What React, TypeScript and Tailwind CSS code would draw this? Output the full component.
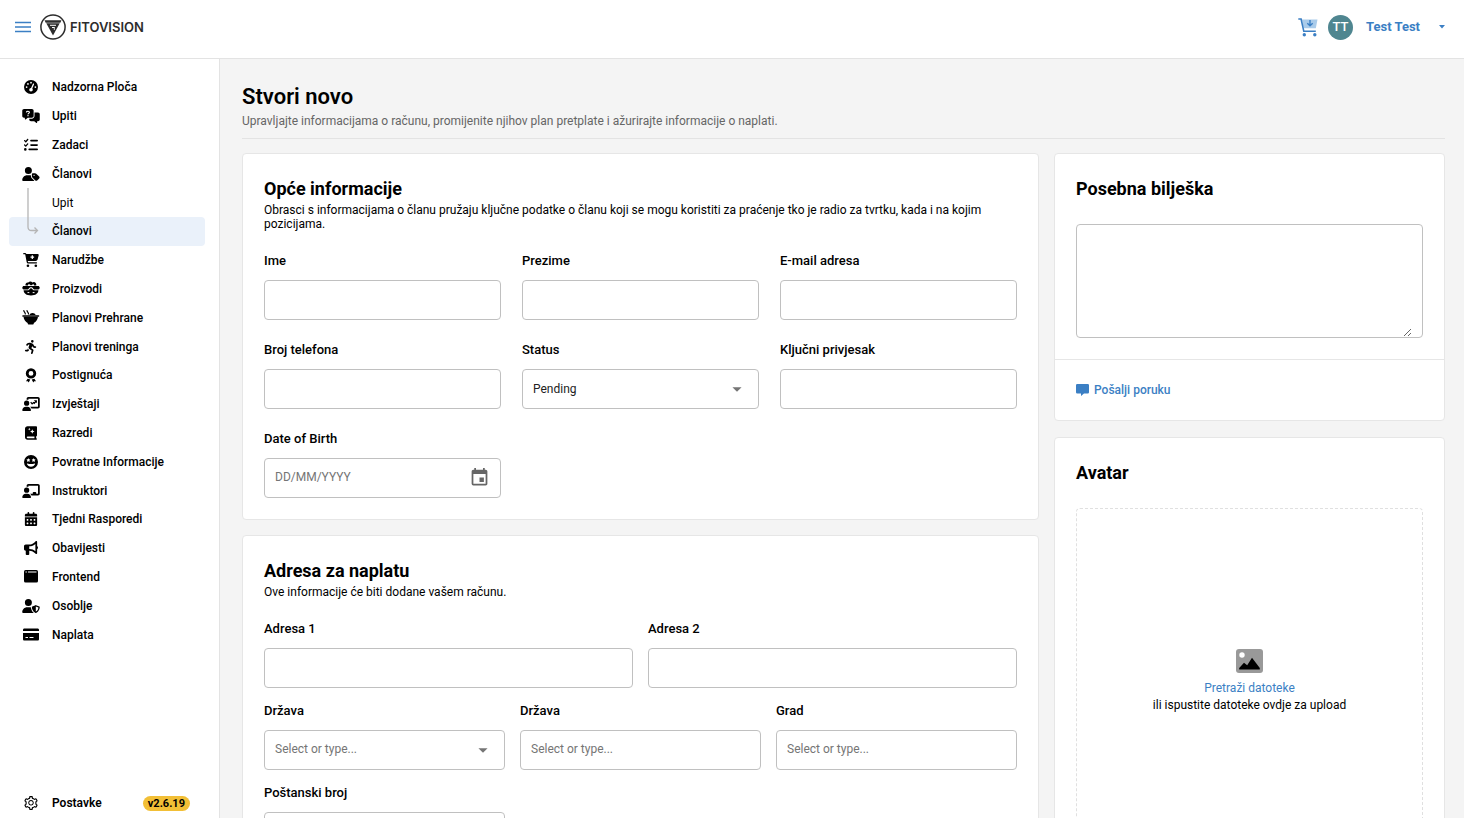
import type { ReactNode } from 'react'
import { AiOutlineSetting } from 'react-icons/ai'
import {
    FaBullhorn,
    FaCalendarDays,
    FaChalkboardUser,
    FaFaceGrinStars,
    FaGaugeHigh,
    FaListCheck,
    FaPersonRunning,
    FaUserShield,
    FaUserTag,
} from 'react-icons/fa6'
import { MdArrowDropDown, MdInsertInvitation } from 'react-icons/md'

interface NavItem {
    label: string
    icon?: ReactNode
    active?: boolean
    sub?: boolean
}

function MessagesIcon() {
    return (
        <svg viewBox="0 0 640 512" className="h-[14px] w-[18px]" fill="currentColor" aria-hidden="true">
            <path d="M64 0C28.7 0 0 28.7 0 64V256c0 35.3 28.7 64 64 64H96v48c0 6.1 3.4 11.6 8.8 14.3s11.9 2.1 16.8-1.5L202.7 320H352c35.3 0 64-28.7 64-64V64c0-35.3-28.7-64-64-64H64z" />
            <path d="M256 352v32c0 35.3 28.7 64 64 64H437.3l81.1 60.8c4.8 3.6 11.3 4.2 16.8 1.5s8.8-8.2 8.8-14.3V448h32c35.3 0 64-28.7 64-64V192c0-35.3-28.7-64-64-64H448V256c0 53-43 96-96 96H256z" />
            <path d="M152 112c6-44 112-48 112 8 0 34-52 32-52 66" fill="none" stroke="#fff" strokeWidth="38" strokeLinecap="round" />
            <circle cx="210" cy="244" r="25" fill="#fff" />
        </svg>
    )
}

function CartIcon() {
    return (
        <svg viewBox="0 0 576 512" className="h-[14px] w-[16px]" fill="currentColor" aria-hidden="true">
            <path d="M24 0C10.7 0 0 10.7 0 24s10.7 24 24 24h45.5c3.8 0 7.1 2.7 7.9 6.5l51.6 271c6.5 34 36.2 58.5 70.7 58.5H488c13.3 0 24-10.7 24-24s-10.7-24-24-24H199.7c-11.5 0-21.4-8.2-23.6-19.5L170.7 288h288.5c32.6 0 61.1-21.8 69.5-53.3l41-152.3C576.6 57 557.4 32 531.1 32H120.1C111 12.8 91.6 0 69.5 0H24z" />
            <path d="M336 84V216M270 150H402" stroke="#fff" strokeWidth="44" />
            <circle cx="176" cy="464" r="48" />
            <circle cx="464" cy="464" r="48" />
        </svg>
    )
}

function ProductsIcon() {
    return (
        <svg viewBox="0 0 18 15" className="h-[15px] w-[18px]" fill="currentColor" aria-hidden="true">
            <path d="M3.500 4.500C3 2.500 4.600 1 6.300 1.500 7.400 0 9.600.2 10.300 1.500 12 .2 14.800 1.400 14.300 4.500H11.900C12.300 3.200 10.800 2.700 10.200 3.700L9 4.500 7.800 3.600C7 2.900 5.800 3.500 6 4.500z" />
            <path d="M1.200 5H16.800C18.200 6.300 18 8 16.300 8.500H12L10 6.200H8L6 8.500H1.700C0 8 -.2 6.300 1.200 5z" />
            <path d="M1.600 9.300H6.500L9 7 11.500 9.300H16.400C16.200 12.600 13.600 14.500 9 14.500S1.800 12.600 1.600 9.300z" />
            <path d="M5.500 11.600H7.300M10.700 11.600H12.500" stroke="#fff" strokeWidth="1" />
        </svg>
    )
}

function BowlIcon() {
    return (
        <svg viewBox="0 0 18 15" className="h-[15px] w-[18px]" fill="currentColor" aria-hidden="true">
            <path d="M1.800.6C1.800 2 3.500 2.300 3.300 4M5 .6C5 2 6.700 2.300 6.500 4" fill="none" stroke="currentColor" strokeWidth="1.200" strokeLinecap="round" />
            <path d="M7.400 5C7.900 3.600 9 2.900 10.500 2.900S13.200 3.600 13.700 5z" />
            <path d="M.9 5.300H16.600C17.500 5.300 17.500 6.800 16.600 6.800H.9C0 6.800 0 5.300.9 5.300z" />
            <path d="M1.500 6.800H16C15.700 9.800 14 12 11.800 13V13.500Q11.800 14.500 10.800 14.500H6.700Q5.700 14.500 5.700 13.500V13C3.500 12 1.800 9.800 1.500 6.800z" />
        </svg>
    )
}

function AwardIcon() {
    return (
        <svg viewBox="0 0 14 15" className="h-[15px] w-[14px]" aria-hidden="true">
            <circle cx="7" cy="5.400" r="3.800" fill="none" stroke="currentColor" strokeWidth="2.800" />
            <path d="M3.600 10.800 2 13.300 3.800 13.200 4.700 14.600 6.300 11.600zM10.400 10.800 12 13.300 10.200 13.200 9.300 14.600 7.700 11.600z" fill="currentColor" />
        </svg>
    )
}

function ReportsIcon() {
    return (
        <svg viewBox="0 0 640 512" className="h-[14px] w-[18px]" fill="currentColor" aria-hidden="true">
            <path d="M160 64c0-35.300 28.700-64 64-64H576c35.300 0 64 28.700 64 64V352c0 35.300-28.700 64-64 64H336.800c-11.800-25.500-29.900-47.500-52.400-64H576V64L224 64v49.100C205.200 102.200 183.300 96 160 96V64zm0 64a96 96 0 1 1 0 192 96 96 0 1 1 0-192zM133.300 352h53.300C260.300 352 320 411.700 320 485.300c0 14.700-11.900 26.700-26.700 26.700H26.700C11.900 512 0 500.100 0 485.300C0 411.700 59.700 352 133.300 352z" />
            <path d="M310 190 360 250 410 205 440 235 510 150" fill="none" stroke="currentColor" strokeWidth="44" />
            <path d="M420 115H535V230z" />
        </svg>
    )
}

function BookIcon() {
    return (
        <svg viewBox="0 0 448 512" className="h-[14px] w-[12px]" fill="currentColor" aria-hidden="true">
            <path d="M96 0C43 0 0 43 0 96V416c0 53 43 96 96 96H416c17.700 0 32-14.300 32-32s-14.300-32-32-32V384c17.700 0 32-14.300 32-32V32c0-17.700-14.300-32-32-32H96zm0 384H352v64H96c-17.700 0-32-14.300-32-32s14.300-32 32-32z" />
            <path d="M272 116 296 176 356 200 296 224 272 284 248 224 188 200 248 176z" fill="#fff" />
            <path d="M160 64 174 98 208 112 174 126 160 160 146 126 112 112 146 98z" fill="#fff" />
        </svg>
    )
}

function BrowserIcon() {
    return (
        <svg viewBox="0 0 14 13" className="h-[13px] w-[14px]" aria-hidden="true">
            <rect width="14" height="12.500" rx="1.600" fill="currentColor" />
            <path d="M1.500 2h1.300M4 2h8.500" stroke="#fff" strokeWidth="1" />
        </svg>
    )
}

function CardIcon() {
    return (
        <svg viewBox="0 0 16 13" className="h-[13px] w-[16px]" fill="currentColor" aria-hidden="true">
            <path d="M1.400.5H14.600C15.400.5 16 1.100 16 1.900V3H0V1.900C0 1.100.6.5 1.400.5z" />
            <path d="M0 5H16V11.200C16 12 15.400 12.600 14.600 12.600H1.400C.6 12.600 0 12 0 11.200z" />
            <path d="M2.500 9.500H5M6.500 9.500H10.500" stroke="#fff" strokeWidth="1" />
        </svg>
    )
}

const navItems: NavItem[] = [
    { label: 'Nadzorna Ploča', icon: <FaGaugeHigh size={14} /> },
    { label: 'Upiti', icon: <MessagesIcon /> },
    { label: 'Zadaci', icon: <FaListCheck size={14} /> },
    { label: 'Članovi', icon: <FaUserTag className="h-[14px] w-[18px]" /> },
    { label: 'Upit', sub: true },
    { label: 'Članovi', sub: true, active: true },
    { label: 'Narudžbe', icon: <CartIcon /> },
    { label: 'Proizvodi', icon: <ProductsIcon /> },
    { label: 'Planovi Prehrane', icon: <BowlIcon /> },
    { label: 'Planovi treninga', icon: <FaPersonRunning size={14} /> },
    { label: 'Postignuća', icon: <AwardIcon /> },
    { label: 'Izvještaji', icon: <ReportsIcon /> },
    { label: 'Razredi', icon: <BookIcon /> },
    { label: 'Povratne Informacije', icon: <FaFaceGrinStars size={14} /> },
    { label: 'Instruktori', icon: <FaChalkboardUser className="h-[14px] w-[18px]" /> },
    { label: 'Tjedni Rasporedi', icon: <FaCalendarDays size={14} /> },
    { label: 'Obavijesti', icon: <FaBullhorn size={14} /> },
    { label: 'Frontend', icon: <BrowserIcon /> },
    { label: 'Osoblje', icon: <FaUserShield className="h-[14px] w-[18px]" /> },
    { label: 'Naplata', icon: <CardIcon /> },
]

function Logo() {
    return (
        <a href="#" className="flex items-center gap-1 text-[#2d2d2d]">
            <svg viewBox="0 0 26 26" className="size-[26px]" aria-hidden="true">
                <circle cx="13" cy="13" r="12.100" fill="none" stroke="currentColor" strokeWidth="1.500" />
                <path d="M4.500 6.300H21.500L20.300 8.700H5.700z" fill="currentColor" />
                <path d="M6.300 9.300H19.700L13 21.500z" fill="currentColor" />
                <path d="M10 11.300H16M12 13.500H14.300" fill="none" stroke="#fff" strokeWidth="1" />
                <path d="M14.300 13V16" fill="none" stroke="#fff" strokeWidth=".8" />
            </svg>
            <span className="font-['Inter',sans-serif] text-[13px] leading-4 font-semibold">FITOVISION</span>
        </a>
    )
}

function Header() {
    return (
        <header className="flex shrink-0 items-center justify-between border-b border-[#e3e3e3] bg-white pt-[14px] pr-[19px] pb-[18px] pl-[15px]">
            <div className="flex items-center gap-[9px]">
                <button type="button" aria-label="Izbornik" className="text-[#3b7fc4]">
                    <svg viewBox="0 0 16 12" className="h-3 w-4" stroke="currentColor" strokeWidth="1.700" aria-hidden="true">
                        <path d="M0 1.500H16M0 6H16M0 10.500H16" />
                    </svg>
                </button>
                <Logo />
            </div>
            <div className="flex items-center">
                <button type="button" aria-label="Košarica" className="mr-[10px] text-[#3b7fc4]">
                    <svg viewBox="0 0 20 19" className="h-[19px] w-5" aria-hidden="true">
                        <path d="M4 1.500H19.500L17.800 10.200H5.600z" fill="#a9cbea" />
                        <path d="M.3 1H3.100L5.800 13.300H17.800" fill="none" stroke="currentColor" strokeWidth="1.600" />
                        <path d="M12 2V7.200M9.300 5.300 12 7.800 14.700 5.300" fill="none" stroke="currentColor" strokeWidth="1.400" />
                        <circle cx="6.300" cy="16.700" r="1.700" fill="currentColor" />
                        <circle cx="16.800" cy="16.700" r="1.700" fill="currentColor" />
                    </svg>
                </button>
                <span className="flex size-[25px] items-center justify-center rounded-full bg-[#4f8690] text-[13px] font-medium text-white">TT</span>
                <button type="button" className="ml-[13px] flex items-center gap-[19px] text-[13px] leading-4 font-bold text-[#3b7fc4]">
                    Test Test
                    <svg viewBox="0 0 6 4" className="h-1 w-[6px]" fill="currentColor" aria-hidden="true">
                        <path d="M0 0H6L3 3.500z" />
                    </svg>
                </button>
            </div>
        </header>
    )
}

function Sidebar() {
    return (
        <aside className="flex w-[220px] shrink-0 flex-col border-r border-[#e3e3e3] bg-white pt-[14px] pr-[14px] pb-[5px] pl-[9px]">
            <nav className="relative">
                <ul className="flex min-h-[576px] flex-col">
                    {navItems.map((item, index) => (
                        <li key={index} className="flex flex-1">
                            <a
                                href="#"
                                className={`flex flex-1 items-center rounded-[4px] pl-3 text-[12px] leading-4 text-black ${item.active ? 'bg-[#eaf1fa]' : ''} ${item.sub && !item.active ? 'font-normal' : 'font-medium'}`}
                            >
                                <span className="mr-[11px] flex w-5 justify-center">{item.icon}</span>
                                {item.label}
                            </a>
                        </li>
                    ))}
                </ul>
                {/* Linija koja povezuje podizbornik */}
                <svg viewBox="0 0 12 48" className="absolute top-[115px] left-[18px] h-12 w-3" fill="none" stroke="#b5b5b5" aria-hidden="true">
                    <path d="M1 0V39Q1 42.500 4.500 42.500H10M7.500 39.500 10.500 42.500 7.500 45.500" strokeWidth="1.300" />
                </svg>
            </nav>
            <div className="mt-auto flex items-center pr-[15px] pl-3">
                <a href="#" className="flex flex-1 items-center text-[12px] leading-5 font-semibold">
                    <span className="mr-[11px] flex w-5 justify-center">
                        <AiOutlineSetting size={16} />
                    </span>
                    Postavke
                </a>
                <span className="rounded-full bg-[#f2bf36] px-[5px] text-[11px] leading-[15px] font-bold">v2.6.19</span>
            </div>
        </aside>
    )
}

interface CardProps {
    title: string
    description?: string
    children: ReactNode
    footer?: ReactNode
}

function Card({ title, description, children, footer }: CardProps) {
    return (
        <section className="rounded-[4px] border border-[#e6e6e6] bg-white">
            <div className="p-[21px]">
                <h2 className="text-[18px] leading-7 font-bold">{title}</h2>
                {description && <p className="text-[12px] leading-[14px]">{description}</p>}
                <div className="mt-[21px]">{children}</div>
            </div>
            {footer && <div className="border-t border-[#e6e6e6] p-[21px]">{footer}</div>}
        </section>
    )
}

interface FieldProps {
    id: string
    label: string
    placeholder?: string
    adornment?: ReactNode
    options?: string[]
}

function Field({ id, label, placeholder, adornment, options }: FieldProps) {
    return (
        <div className="flex min-w-0 flex-col gap-[10px]">
            <label htmlFor={id} className="text-[13px] leading-[18px] font-medium">
                {label}
            </label>
            <div className="flex h-10 items-center rounded-[4px] border border-[#c0c0c0] bg-white pr-[10px] text-[12px]">
                {options ? (
                    <select id={id} className="h-full min-w-0 flex-1 appearance-none bg-transparent pl-[10px] text-[#222] outline-none">
                        {options.map((option) => (
                            <option key={option}>{option}</option>
                        ))}
                    </select>
                ) : (
                    <input
                        id={id}
                        type="text"
                        placeholder={placeholder}
                        className="h-full min-w-0 flex-1 bg-transparent pb-[2px] pl-[10px] outline-none placeholder:text-[#757575]"
                    />
                )}
                {adornment}
            </div>
        </div>
    )
}

function App() {
    return (
        <div className="flex h-screen flex-col bg-[#f4f4f4] font-['Roboto',sans-serif] text-black">
            <Header />
            <div className="flex min-h-0 flex-1">
                <Sidebar />
                <main className="min-w-0 flex-1 overflow-y-auto pt-[22px] pr-[19px] pb-6 pl-[22px] [scrollbar-width:none]">
                    <div className="border-b border-[#e3e3e3] pb-[9px]">
                        <h1 className="text-[22px] leading-8 font-semibold">Stvori novo</h1>
                        <p className="text-[12px] leading-4 text-[#666]">
                            Upravljajte informacijama o računu, promijenite njihov plan pretplate i ažurirajte informacije o naplati.
                        </p>
                    </div>

                    <div className="mt-[14px] grid grid-cols-12 items-start gap-[15px]">
                        <div className="col-span-8 flex flex-col gap-[15px]">
                            <Card
                                title="Opće informacije"
                                description="Obrasci s informacijama o članu pružaju ključne podatke o članu koji se mogu koristiti za praćenje tko je radio za tvrtku, kada i na kojim pozicijama."
                            >
                                <div className="grid grid-cols-3 gap-[21px]">
                                    <Field id="ime" label="Ime" />
                                    <Field id="prezime" label="Prezime" />
                                    <Field id="email" label="E-mail adresa" />
                                    <Field id="telefon" label="Broj telefona" />
                                    <Field
                                        id="status"
                                        label="Status"
                                        options={['Pending', 'Active', 'Inactive']}
                                        adornment={<MdArrowDropDown size={22} className="text-[#757575]" />}
                                    />
                                    <Field id="privjesak" label="Ključni privjesak" />
                                    <Field
                                        id="rodenje"
                                        label="Date of Birth"
                                        placeholder="DD/MM/YYYY"
                                        adornment={
                                            <button type="button" aria-label="Odaberi datum" className="pb-[2px] text-[#666]">
                                                <MdInsertInvitation size={21} />
                                            </button>
                                        }
                                    />
                                </div>
                            </Card>

                            <Card title="Adresa za naplatu" description="Ove informacije će biti dodane vašem računu.">
                                <div className="flex flex-col gap-[14px]">
                                    <div className="grid grid-cols-2 gap-[15px]">
                                        <Field id="adresa1" label="Adresa 1" />
                                        <Field id="adresa2" label="Adresa 2" />
                                    </div>
                                    <div className="grid grid-cols-3 gap-x-[15px] gap-y-[14px]">
                                        <Field
                                            id="drzava"
                                            label="Država"
                                            placeholder="Select or type..."
                                            adornment={<MdArrowDropDown size={22} className="text-[#757575]" />}
                                        />
                                        <Field id="regija" label="Država" placeholder="Select or type..." />
                                        <Field id="grad" label="Grad" placeholder="Select or type..." />
                                        <Field id="posta" label="Poštanski broj" />
                                    </div>
                                </div>
                            </Card>
                        </div>

                        <div className="col-span-4 flex flex-col gap-4">
                            <Card
                                title="Posebna bilješka"
                                footer={
                                    <a href="#" className="flex items-center gap-[5px] text-[12px] leading-[18px] font-medium text-[#3b7fc4]">
                                        <svg viewBox="0 0 13 12" className="h-3 w-[13px]" fill="currentColor" aria-hidden="true">
                                            <path d="M1.200 0H11.800Q13 0 13 1.200V8.300Q13 9.500 11.800 9.500H8L5 12V9.500H1.200Q0 9.500 0 8.300V1.200Q0 0 1.200 0z" />
                                        </svg>
                                        Pošalji poruku
                                    </a>
                                }
                            >
                                <div className="rounded-[4px] border border-[#c0c0c0] px-[10px]">
                                    <textarea aria-label="Posebna bilješka" className="block h-28 w-full resize text-[12px] outline-none" />
                                </div>
                            </Card>

                            <Card title="Avatar">
                                <div className="flex aspect-square flex-col items-center justify-center rounded-[4px] border border-dashed border-[#e0e0e0] text-[12px] leading-[17px]">
                                    <svg viewBox="0 0 27 24" className="mb-[7px] h-6 w-[27px]" aria-hidden="true">
                                        <rect width="27" height="24" rx="3" fill="#999" />
                                        <circle cx="6" cy="6" r="2.700" fill="#fff" />
                                        <path d="M3.200 20.500V19L8 13.800 11.200 16.300 16 8.800 23.800 19V20.500z" fill="#000" />
                                    </svg>
                                    <button type="button" className="text-[#3b7fc4]">
                                        Pretraži datoteke
                                    </button>
                                    <p>ili ispustite datoteke ovdje za upload</p>
                                </div>
                            </Card>
                        </div>
                    </div>
                </main>
            </div>
        </div>
    )
}

export default App
